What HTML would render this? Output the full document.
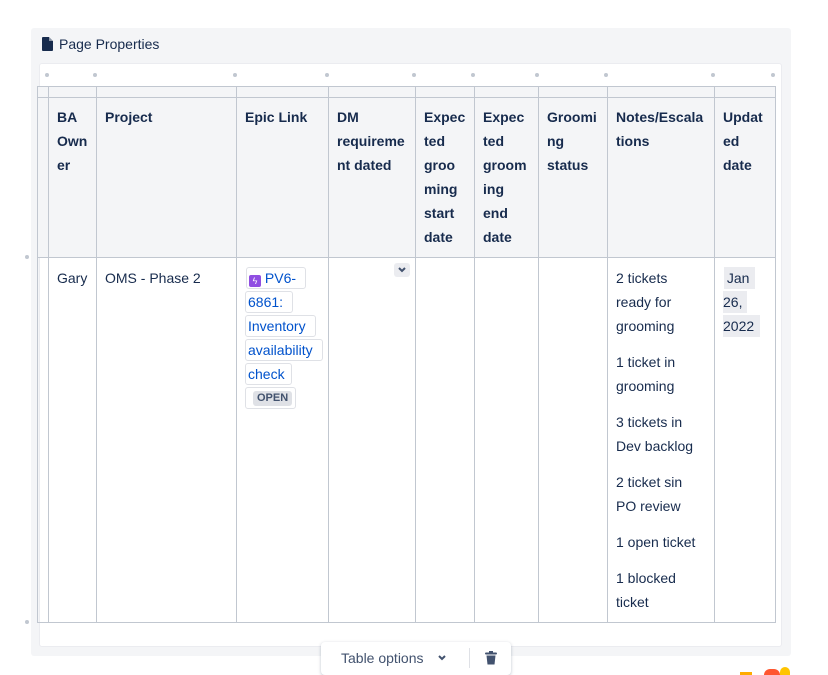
<!DOCTYPE html>
<html><head><style>
*{margin:0;padding:0;box-sizing:border-box}
body{width:828px;height:675px;background:#fff;font-family:"Liberation Sans",Arial,sans-serif;font-size:14px;color:#172b4d;position:relative;overflow:hidden}
.a{position:absolute}
.t{position:absolute;line-height:24px;white-space:nowrap}
.h{font-weight:bold}
.v{position:absolute;top:86px;height:537px;width:1px;background:#c1c7d0}
.hl{position:absolute;left:37px;width:739px;height:1px;background:#c1c7d0}
.dot{position:absolute;top:73px;width:4px;height:4px;border-radius:2px;background:#c1c7d0}
.ch{position:absolute;border:1px solid #dfe1e6;border-radius:3px;height:22px;color:#0052cc;padding:0 2px;line-height:20px;background:#fff}
</style></head><body>
<div class="a" style="left:31px;top:28px;width:760px;height:628px;background:#f4f5f7;border-radius:3px"></div>
<div class="a" style="left:39px;top:63px;width:743px;height:584px;background:#fff;border-radius:3px;border:1px solid #ebecf0"></div>
<svg class="a" style="left:42px;top:37px" width="11" height="14" viewBox="0 0 11 14"><path d="M0 1Q0 0 1 0H7L11 4V13Q11 14 10 14H1Q0 14 0 13Z" fill="#172b4d"/><path d="M7 0V4H11" fill="#fff" opacity=".5"/></svg>
<div class="t" style="left:59px;top:32px;color:#172b4d">Page Properties</div>
<div class="dot" style="left:45px"></div><div class="dot" style="left:93px"></div><div class="dot" style="left:233px"></div><div class="dot" style="left:325px"></div><div class="dot" style="left:412px"></div><div class="dot" style="left:471px"></div><div class="dot" style="left:535px"></div><div class="dot" style="left:604px"></div><div class="dot" style="left:711px"></div><div class="dot" style="left:771px"></div>
<div class="a" style="left:25px;top:255px;width:4px;height:4px;border-radius:2px;background:#c1c7d0"></div>
<div class="a" style="left:25px;top:620px;width:4px;height:4px;border-radius:2px;background:#c1c7d0"></div>
<div class="a" style="left:37px;top:86px;width:739px;height:171px;background:#f4f5f7"></div>
<div class="hl" style="top:86px"></div><div class="hl" style="top:97px"></div><div class="hl" style="top:257px"></div><div class="hl" style="top:622px"></div>
<div class="v" style="left:37px"></div><div class="v" style="left:48px"></div><div class="v" style="left:96px"></div><div class="v" style="left:236px"></div><div class="v" style="left:328px"></div><div class="v" style="left:415px"></div><div class="v" style="left:474px"></div><div class="v" style="left:538px"></div><div class="v" style="left:607px"></div><div class="v" style="left:714px"></div><div class="v" style="left:775px"></div>
<div class="t h" style="left:57px;top:105px">BA<br>Own<br>er</div>
<div class="t h" style="left:105px;top:105px">Project</div>
<div class="t h" style="left:245px;top:105px">Epic Link</div>
<div class="t h" style="left:337px;top:105px">DM<br>requireme<br>nt dated</div>
<div class="t h" style="left:424px;top:105px">Expec<br>ted<br>groo<br>ming<br>start<br>date</div>
<div class="t h" style="left:483px;top:105px">Expec<br>ted<br>groom<br>ing<br>end<br>date</div>
<div class="t h" style="left:547px;top:105px">Groomi<br>ng<br>status</div>
<div class="t h" style="left:616px;top:105px">Notes/Escala<br>tions</div>
<div class="t h" style="left:723px;top:105px">Updat<br>ed<br>date</div>
<div class="t" style="left:57px;top:266px">Gary</div>
<div class="t" style="left:105px;top:266px">OMS - Phase 2</div>
<div class="ch" style="left:246px;top:267px;width:60px"><span style="display:inline-block;width:12px;height:12px;background:#904ee2;border-radius:2px;vertical-align:-1px;color:#fff;font-size:9px;text-align:center;line-height:12px">ϟ</span> PV6-</div>
<div class="ch" style="left:245px;top:291px;width:48px">6861:</div>
<div class="ch" style="left:245px;top:315px;width:71px">Inventory</div>
<div class="ch" style="left:245px;top:339px;width:78px">availability</div>
<div class="ch" style="left:245px;top:363px;width:47px">check</div>
<div class="ch" style="left:245px;top:387px;width:51px"><span style="display:inline-block;margin-left:5px;margin-top:3px;background:#dfe1e6;color:#42526e;font-size:11px;font-weight:bold;line-height:15px;padding:0 4px;border-radius:3px;vertical-align:top">OPEN</span></div>
<div class="a" style="left:394px;top:263px;width:16px;height:14px;background:#ebecf0;border-radius:3px"></div>
<svg class="a" style="left:397px;top:266px" width="10" height="8"><path d="M2 2L5 5L8 2" stroke="#42526e" stroke-width="2" fill="none"/></svg>
<div class="t" style="left:616px;top:266px">2 tickets<br>ready for<br>grooming</div>
<div class="t" style="left:616px;top:350px">1 ticket in<br>grooming</div>
<div class="t" style="left:616px;top:410px">3 tickets in<br>Dev backlog</div>
<div class="t" style="left:616px;top:470px">2 ticket sin<br>PO review</div>
<div class="t" style="left:616px;top:530px">1 open ticket</div>
<div class="t" style="left:616px;top:566px">1 blocked<br>ticket</div>
<div class="a" style="left:724px;top:267px;width:31px;height:22px;background:#ebecf0"></div>
<div class="a" style="left:723px;top:291px;width:24px;height:22px;background:#ebecf0"></div>
<div class="a" style="left:723px;top:315px;width:37px;height:22px;background:#ebecf0"></div>
<div class="t" style="left:723px;top:266px">&nbsp;Jan<br>26,<br>2022</div>
<div class="a" style="left:321px;top:642px;width:190px;height:33px;background:#fff;border-radius:4px;box-shadow:0 1px 3px rgba(9,30,66,.25)"></div>
<div class="t" style="left:341px;top:646px;color:#42526e">Table options</div>
<svg class="a" style="left:437px;top:654px" width="10" height="8"><path d="M2 2L5 5L8 2" stroke="#42526e" stroke-width="2" fill="none"/></svg>
<div class="a" style="left:469px;top:648px;width:1px;height:20px;background:#dfe1e6"></div>
<svg class="a" style="left:484px;top:651px" width="14" height="14" viewBox="0 0 14 14"><rect x="1" y="1.5" width="12" height="2" rx="1" fill="#42526e"/><rect x="5" y="0" width="4" height="2" fill="#42526e"/><path d="M2.5 4.5H11.5L10.5 13.5H3.5Z" fill="#42526e"/></svg>
<div class="a" style="left:740px;top:672px;width:12px;height:3px;background:#ffab00"></div>
<div class="a" style="left:764px;top:669px;width:16px;height:6px;background:#ff5630;border-radius:8px 8px 0 0"></div>
<div class="a" style="left:780px;top:667px;width:10px;height:8px;background:#ffc400;border-radius:5px 5px 0 0"></div>
</body></html>
